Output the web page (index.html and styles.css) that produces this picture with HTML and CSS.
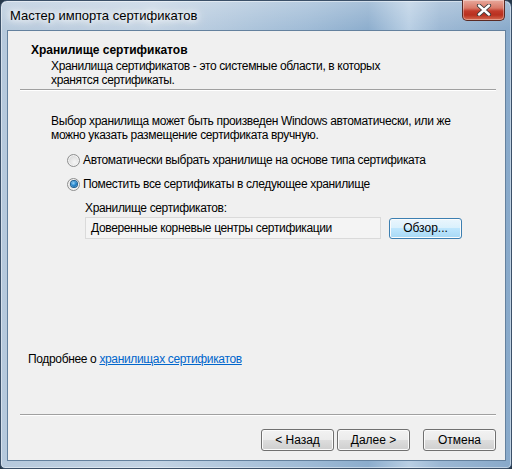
FILE: index.html
```html
<!DOCTYPE html>
<html lang="ru">
<head>
    <meta charset="UTF-8">
    <title>Мастер импорта сертификатов</title>
    <link rel="stylesheet" href="styles.css">
</head>
<body>
    <div class="window">
        <div class="titlebar">
            <span class="title">Мастер импорта сертификатов</span>
            <div class="close">
                <svg width="16" height="12" viewBox="0 0 16 12">
                    <path d="M3 1.5 L13 10.5 M13 1.5 L3 10.5" stroke="#3a3a3a" stroke-width="4.2" stroke-linecap="round"/>
                    <path d="M3 1.5 L13 10.5 M13 1.5 L3 10.5" stroke="#fff" stroke-width="2.4" stroke-linecap="round"/>
                </svg>
            </div>
        </div>

        <div class="client">
            <div class="header">
                <div class="header-title">Хранилище сертификатов</div>
                <div class="header-sub">Хранилища сертификатов - это системные области, в которых<br>хранятся сертификаты.</div>
            </div>
            <div class="sep"></div>

            <div class="content">
                <p class="intro">Выбор хранилища может быть произведен Windows автоматически, или же<br>можно указать размещение сертификата вручную.</p>

                <label class="radio-row">
                    <span class="radio"></span>
                    <span>Автоматически выбрать хранилище на основе типа сертификата</span>
                </label>
                <label class="radio-row second">
                    <span class="radio checked"></span>
                    <span>Поместить все сертификаты в следующее хранилище</span>
                </label>

                <div class="store">
                    <div class="store-label">Хранилище сертификатов:</div>
                    <div class="store-row">
                        <div class="textbox">Доверенные корневые центры сертификации</div>
                        <button class="btn btn-hot">Обзор...</button>
                    </div>
                </div>
            </div>

            <div class="more">Подробнее о <a href="#">хранилищах сертификатов</a></div>

            <div class="footer">
                <div class="sep"></div>
                <div class="buttons">
                    <button class="btn">&lt; Назад</button>
                    <button class="btn">Далее &gt;</button>
                    <button class="btn btn-cancel">Отмена</button>
                </div>
            </div>
        </div>
    </div>
</body>
</html>
```

FILE: styles.css
```css
body {
    margin: 0;
    background: #27394b;
    font-family: "Liberation Sans", Arial, sans-serif;
    font-size: 12px;
    color: #000;
}
.window {
    width: 512px;
    height: 469px;
    box-sizing: border-box;
    border: 1px solid #3b5068;
    border-radius: 7px 7px 5px 5px;
    background:
        linear-gradient(180deg, rgba(255,255,255,0.25) 0, rgba(255,255,255,0) 30px),
        linear-gradient(90deg, #b6c9dc 0, #c3d3e3 30%, #9fbbd6 60%, #8cadcd 72%, #b9cfe4 80%, #9cb8d4 86%, #88a9ca 100%);
    display: flex;
    flex-direction: column;
    position: relative;
    box-shadow: inset 0 0 0 1px rgba(255,255,255,0.45);
}
.titlebar {
    height: 29px;
    display: flex;
    align-items: center;
    padding-left: 9px;
}
.title {
    font-size: 13px;
    color: #000;
    text-shadow: 0 0 6px #fff, 0 0 10px #fff, 0 0 14px rgba(255,255,255,0.9);
}
.close {
    position: absolute;
    top: -1px;
    right: 6px;
    width: 43px;
    height: 21px;
    box-sizing: border-box;
    border: 1px solid #5a2a24;
    border-top: none;
    border-radius: 0 0 5px 5px;
    background: linear-gradient(180deg, #e8a99c 0, #d97a69 40%, #c23b2b 55%, #b8301f 75%, #d66a50 100%);
    box-shadow: inset 0 0 0 1px rgba(255,255,255,0.35);
    display: flex;
    align-items: center;
    justify-content: center;
}
.client {
    margin: 0 5px 7px 6px;
    flex: 1;
    border: 1px solid #64819e;
    background: #f0f0f0;
    display: flex;
    flex-direction: column;
    line-height: 14px;
    letter-spacing: -0.35px;
}
.header {
    padding: 12px 0 0 23px;
}
.header-title {
    font-weight: bold;
    letter-spacing: 0;
}
.header-sub {
    margin: 2px 0 0 20px;
}
.sep {
    margin: 2px 9px 0 12px;
    border-top: 1px solid #a0a0a0;
    border-bottom: 1px solid #fff;
}
.content {
    padding: 23px 0 0 43px;
}
.intro {
    margin: 0;
}
.radio-row {
    display: flex;
    align-items: center;
    gap: 3px;
    height: 16px;
    margin: 10px 0 0 16px;
}
.radio-row.second {
    margin-top: 8px;
}
.radio {
    width: 13px;
    height: 13px;
    box-sizing: border-box;
    border: 1px solid #8e8f8f;
    border-radius: 50%;
    background: radial-gradient(circle at 60% 65%, #f6f6f6 0, #e0e0e0 55%, #cfcfcf 100%);
    box-shadow: inset 0 0 0 1px #f4f4f4;
    display: flex;
    align-items: center;
    justify-content: center;
}
.radio.checked::after {
    content: "";
    width: 6px;
    height: 6px;
    border-radius: 50%;
    background: radial-gradient(circle at 40% 35%, #9bd3f5 0, #2a8ad0 45%, #0b4f87 100%);
    box-shadow: 0 0 0 1px #1b5e93;
}
.store {
    margin: 9px 0 0 34px;
}
.store-row {
    display: flex;
    align-items: center;
    gap: 8px;
    margin-top: 2px;
}
.textbox {
    width: 296px;
    height: 22px;
    box-sizing: border-box;
    border: 1px solid #dadada;
    background: #f4f4f4;
    padding-left: 5px;
    display: flex;
    align-items: center;
}
.more {
    margin: 113px 0 0 20px;
}
.more a {
    color: #0066cc;
}
.footer {
    margin-top: auto;
    padding-bottom: 9px;
}
.buttons {
    display: flex;
    justify-content: flex-end;
    gap: 3px;
    margin: 13px 9px 0 0;
}
.btn {
    width: 73px;
    height: 22px;
    box-sizing: border-box;
    border: 1px solid #707070;
    border-radius: 3px;
    background: linear-gradient(180deg, #f2f2f2 0, #ebebeb 50%, #dddddd 50%, #cfcfcf 100%);
    box-shadow: inset 0 0 0 1px #fbfbfb;
    font-family: inherit;
    font-size: 12px;
    letter-spacing: 0;
    color: #000;
    padding: 0;
}
.btn-cancel {
    margin-left: 10px;
}
.btn-hot {
    border-color: #3c7fb1;
    background: linear-gradient(180deg, #eaf6fd 0, #d9f0fc 50%, #bee6fd 50%, #a7d9f5 100%);
    height: 21px;
}
```
